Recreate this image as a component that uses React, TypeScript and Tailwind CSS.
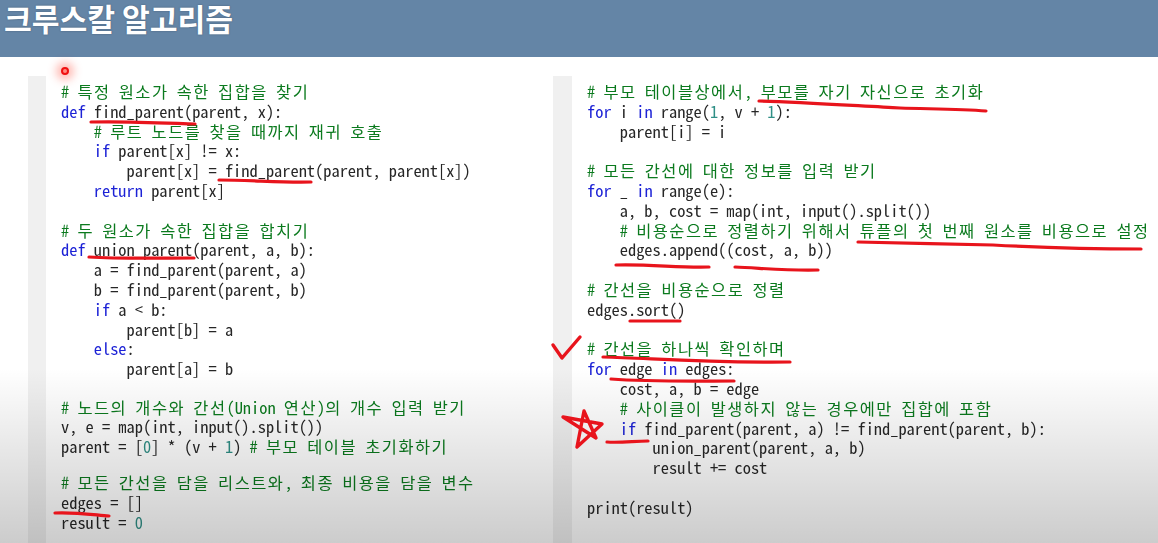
import React from "react";

type Tok = [string, string?];
const K = "text-[#1c22d6]";
const C = "text-[#0b7a1e]";
const N = "text-[#2f8f86]";

const left: Tok[][] = [
  [["# 특정 원소가 속한 집합을 찾기", C]],
  [["def", K], [" find_parent(parent, x):"]],
  [["    # 루트 노드를 찾을 때까지 재귀 호출", C]],
  [["    "], ["if", K], [" parent[x] != x:"]],
  [["        parent[x] = find_parent(parent, parent[x])"]],
  [["    "], ["return", K], [" parent[x]"]],
  [[" "]],
  [["# 두 원소가 속한 집합을 합치기", C]],
  [["def", K], [" union_parent(parent, a, b):"]],
  [["    a = find_parent(parent, a)"]],
  [["    b = find_parent(parent, b)"]],
  [["    "], ["if", K], [" a < b:"]],
  [["        parent[b] = a"]],
  [["    "], ["else", K], [":"]],
  [["        parent[a] = b"]],
];
const leftB: Tok[][] = [
  [["# 노드의 개수와 간선(Union 연산)의 개수 입력 받기", C]],
  [["v, e = map(int, input().split())"]],
  [["parent = ["], ["0", N], ["] * (v + "], ["1", N], [") "], ["# 부모 테이블 초기화하기", C]],
];
const leftC: Tok[][] = [
  [["# 모든 간선을 담을 리스트와, 최종 비용을 담을 변수", C]],
  [["edges = []"]],
  [["result = "], ["0", N]],
];

const right: Tok[][] = [
  [["# 부모 테이블상에서, 부모를 자기 자신으로 초기화", C]],
  [["for", K], [" i "], ["in", K], [" range("], ["1", N], [", v + "], ["1", N], ["):"]],
  [["    parent[i] = i"]],
  [[" "]],
  [["# 모든 간선에 대한 정보를 입력 받기", C]],
  [["for", K], [" _ "], ["in", K], [" range(e):"]],
  [["    a, b, cost = map(int, input().split())"]],
  [["    # 비용순으로 정렬하기 위해서 튜플의 첫 번째 원소를 비용으로 설정", C]],
  [["    edges.append((cost, a, b))"]],
  [[" "]],
  [["# 간선을 비용순으로 정렬", C]],
  [["edges.sort()"]],
  [[" "]],
  [["# 간선을 하나씩 확인하며", C]],
  [["for", K], [" edge "], ["in", K], [" edges:"]],
  [["    cost, a, b = edge"]],
  [["    # 사이클이 발생하지 않는 경우에만 집합에 포함", C]],
  [["    "], ["if", K], [" find_parent(parent, a) != find_parent(parent, b):"]],
  [["        union_parent(parent, a, b)"]],
  [["        result += cost"]],
  [[" "]],
  [["print(result)"]],
];

function Code({ lines }: { lines: Tok[][] }) {
  return (
    <div className="font-['Noto_Sans_Mono_CJK_KR','Noto_Sans_CJK_KR',monospace] text-[16.4px] leading-[19.8px] text-[#262626] whitespace-pre blur-[0.35px]">
      {lines.map((l, i) => (
        <div key={i} className="h-[19.8px]">
          {l.map((t, j) => (
            <span key={j} className={t[1]}>
              {t[0].split(/([가-힣]+)/).map((part, n) =>
                n % 2 === 1 ? (
                  <span key={n} className="tracking-[1.5px]">
                    {part}
                  </span>
                ) : (
                  part
                )
              )}
            </span>
          ))}
        </div>
      ))}
    </div>
  );
}

const marks = [
  "M91 122 C125 121 165 123 195 124",
  "M219 180 C250 180 285 183 311 182",
  "M89 257 C120 259 165 258 194 258",
  "M55 513 C75 512 95 515 109 516",
  "M759 101 C800 102 860 106 900 108 C930 109 960 109 986 111",
  "M858 242 C900 243 950 244 993 245 C1050 248 1100 249 1141 249",
  "M616 265 C650 264 680 268 709 267",
  "M735 267 C760 268 790 271 818 270",
  "M630 321 H680",
  "M603 357 C650 358 700 363 790 362",
  "M611 379 C650 382 700 381 734 381",
  "M607 442 C620 443 635 441 648 441",
];

export default function App() {
  return (
    <div className="relative w-[1158px] h-[543px] overflow-hidden bg-white font-['Noto_Sans_CJK_KR',sans-serif]">
      <header className="h-[57px] bg-[#6485a6] pl-[4px]">
        <h1 className="text-[30.2px] leading-[36px] font-bold text-white [text-shadow:0_0_2px_rgba(0,0,0,0.3)]">크루스칼 알고리즘</h1>
      </header>
      <main className="flex pt-[19px] h-[486px]">
        <section className="ml-[28px] w-[525px] border-l-[18px] border-[#f0f0f0] pl-[15px] pt-[6px]">
          <Code lines={left} />
          <div className="h-[18.6px]" />
          <Code lines={leftB} />
          <div className="h-[16px]" />
          <Code lines={leftC} />
        </section>
        <section className="flex-1 border-l-[19px] border-[#f0f0f0] pl-[15px] pt-[6px]">
          <Code lines={right} />
        </section>
      </main>
      <div className="absolute left-0 right-0 bottom-0 h-[175px] bg-gradient-to-b from-[#00000000] to-[#00000033] pointer-events-none" />
      <span className="absolute left-[61px] top-[67px] w-2 h-2 rounded-full border-[2.5px] border-[#f01010] bg-[#ff8a80] shadow-[0_0_8px_5px_rgba(255,60,40,0.35)]" />
      <svg className="absolute inset-0 pointer-events-none" width="1158" height="543" fill="none" stroke="#e8141c" strokeWidth="3.2" strokeLinecap="round" strokeLinejoin="round">
        {marks.map((d) => (
          <path key={d} d={d} />
        ))}
        <path d="M553 345 L562 358 L580 337" strokeWidth="3.4" />
        <path d="M577 447 L584 411 L596 438 L563 417 L602 424 L577 447" strokeWidth="3.4" />
      </svg>
    </div>
  );
}
